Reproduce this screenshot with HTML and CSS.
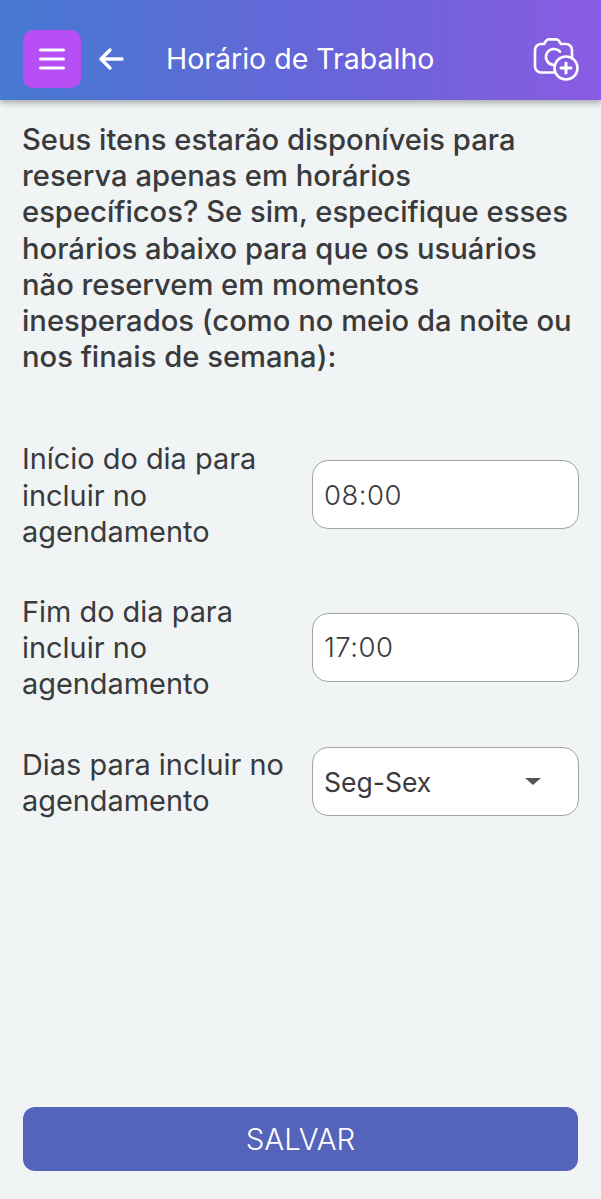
FILE: index.html
```html
<!DOCTYPE html>
<html lang="pt-BR">
<head>
    <meta charset="UTF-8">
    <meta name="viewport" content="width=device-width, initial-scale=1.0">
    <title>Horário de Trabalho</title>
    <link rel="stylesheet" href="styles.css">
</head>
<body>
    <header class="topbar">
        <button class="menu-btn" type="button" aria-label="Menu">
            <svg width="26" height="22" viewBox="0 0 26 22" fill="none" stroke="#fff" stroke-width="3" stroke-linecap="round">
                <path d="M1.500 2h23M1.500 11h23M1.500 20h23"/>
            </svg>
        </button>
        <button class="back-btn" type="button" aria-label="Voltar">
            <svg width="26" height="24" viewBox="0 0 26 24" fill="none" stroke="#fff" stroke-width="3.400" stroke-linecap="round" stroke-linejoin="round">
                <path d="M24 12H3M12 3l-9 9 9 9"/>
            </svg>
        </button>
        <h1 class="title">Horário de Trabalho</h1>
        <button class="camera-btn" type="button" aria-label="Adicionar foto">
            <svg width="46" height="44" viewBox="0 0 46 44" fill="none" stroke="#fff" stroke-width="2.600" stroke-linecap="round" stroke-linejoin="round">
                <path d="M21 35.500H8a6 6 0 0 1-6-6V13a6 6 0 0 1 6-6h3l2-3a3 3 0 0 1 2.500-1.600h8A3 3 0 0 1 26 4l2 3h5a6 6 0 0 1 6 6v8"/>
                <path d="M27 14.700a8 8 0 1 0-7 13.200"/>
                <circle cx="33" cy="31" r="11.500"/>
                <path d="M33 26v10M28 31h10" stroke-width="3"/>
            </svg>
        </button>
    </header>

    <main class="content">
        <p class="intro">Seus itens estarão disponíveis para reserva apenas em horários específicos? Se sim, especifique esses horários abaixo para que os usuários não reservem em momentos inesperados (como no meio da noite ou nos finais de semana):</p>

        <div class="form-row">
            <label class="row-label" for="start">Início do dia para incluir no agendamento</label>
            <input class="field time-field" id="start" type="text" value="08:00">
        </div>
        <div class="form-row">
            <label class="row-label" for="end">Fim do dia para incluir no agendamento</label>
            <input class="field time-field" id="end" type="text" value="17:00">
        </div>
        <div class="form-row">
            <label class="row-label">Dias para incluir no agendamento</label>
            <div class="field select-field">
                <span>Seg-Sex</span>
                <span class="caret"></span>
            </div>
        </div>

        <button class="save-btn" type="button">SALVAR</button>
    </main>
</body>
</html>
```

FILE: styles.css
```css
* {
    box-sizing: border-box;
}
body {
    font-family: 'Inter', sans-serif;
    background-color: #f0f4f5;
    color: #3a3a3c;
    margin: 0;
    min-height: 100vh;
    display: flex;
    flex-direction: column;
}
button {
    border: none;
    background: none;
    padding: 0;
    font-family: inherit;
    display: flex;
    align-items: center;
    justify-content: center;
}
.topbar {
    height: 100px;
    padding: 30px 23px 12px;
    display: flex;
    align-items: center;
    background: linear-gradient(90deg, #4679d2 0%, #6a63d9 60%, #8a5ce3 100%);
    box-shadow: 0 3px 6px rgba(0, 0, 0, 0.3);
}
.menu-btn {
    width: 58px;
    height: 58px;
    border-radius: 10px;
    background: #b84ff5;
}
.back-btn {
    margin-left: 17px;
}
.title {
    margin: 0 0 2px 42px;
    font-size: 28.500px;
    font-weight: 400;
    color: #fff;
    flex: 1;
}
.camera-btn {
    margin-right: -1px;
}
.content {
    flex: 1;
    display: flex;
    flex-direction: column;
    padding: 22px 23px 28px 22px;
}
.intro {
    margin: 0 0 65px;
    font-size: 29.200px;
    font-weight: 470;
    line-height: 36.200px;
}
.form-row {
    display: grid;
    grid-template-columns: 290px 1fr;
    align-items: center;
    margin-bottom: 44px;
}
.row-label {
    padding-top: 1px;
    margin-bottom: -1px;
    font-size: 28.900px;
    line-height: 36.200px;
}
.field {
    width: 267px;
    height: 69px;
    padding: 0 11px;
    background: #fff;
    border: 1.500px solid #a4a4a4;
    border-radius: 16px;
    font-family: inherit;
    font-size: 26.500px;
    color: #3a3a3c;
}
.time-field {
    font-size: 27.500px;
    font-weight: 350;
    letter-spacing: 0.500px;
}
.select-field {
    display: flex;
    align-items: center;
    justify-content: space-between;
    padding-right: 37px;
}
.caret {
    border-left: 8px solid transparent;
    border-right: 8px solid transparent;
    border-top: 7px solid #555;
}
.save-btn {
    margin-top: auto;
    height: 64px;
    width: 555px;
    margin-left: 1px;
    border-radius: 12px;
    background: #5464bb;
    color: #fff;
    font-size: 29.500px;
    font-weight: 300;
}
```
